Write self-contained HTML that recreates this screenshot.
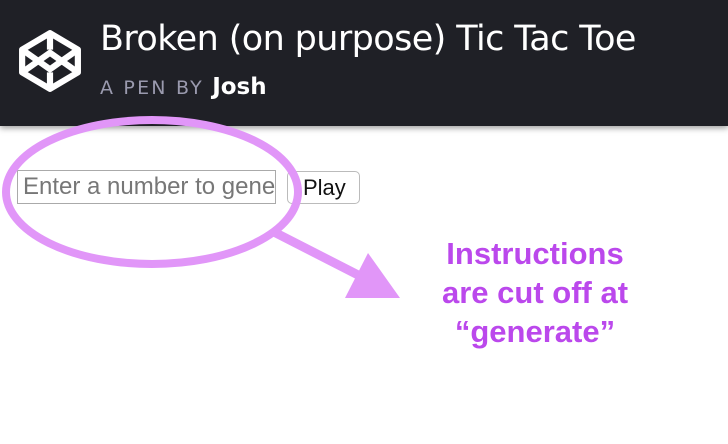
<!DOCTYPE html>
<html><head><style>
body{margin:0;width:728px;height:444px;background:#fff;position:relative;overflow:hidden;font-family:"Liberation Sans",sans-serif}
.hdr{position:absolute;left:0;top:0;width:728px;height:126px;background:#1f2026;box-shadow:0 2px 6px rgba(0,0,0,.4)}
.t{position:absolute;left:100px;top:19px;color:#fff;font-size:35px;font-family:"DejaVu Sans","Liberation Sans",sans-serif;letter-spacing:-0.6px}
.s{position:absolute;left:100px;top:74px;color:#9a9aae;font-size:19px;font-family:"DejaVu Sans",sans-serif;letter-spacing:2.2px}
.s b{color:#fff;letter-spacing:0;font-size:23px}
.inp{position:absolute;left:17px;top:170px;width:259px;height:34px;border:1px solid #aaa;box-sizing:border-box;font-size:24px;color:#777;padding:2px 5px;white-space:nowrap;overflow:hidden}
.btn{position:absolute;left:287px;top:171px;width:73px;height:33px;border:1px solid #bbb;border-radius:5px;box-sizing:border-box;font-size:22px;padding:3px 0 0 15px;color:#111}
.msg{position:absolute;left:395px;top:234px;width:280px;text-align:center;color:#bb48ec;font-weight:bold;font-size:31px;line-height:39px}
</style></head><body>
<div class="hdr">
<svg style="position:absolute;left:18px;top:29px" width="64" height="64" viewBox="0 0 62 62" fill="none" stroke="#fff" stroke-width="6" stroke-linejoin="round">
<path d="M31 4 L58 20 L58 42 L31 58 L4 42 L4 20 Z"/>
<path d="M31 4 V20 M4 20 L31 39 L58 20 M4 42 L31 23 L58 42 M31 42 V58"/>
</svg>
<div class="t">Broken (on purpose) Tic Tac Toe</div>
<div class="s">A PEN BY <b>Josh</b></div>
</div>
<div class="inp">Enter a number to generate</div>
<div class="btn">Play</div>
<svg style="position:absolute;left:0;top:0" width="728" height="444">
<ellipse cx="152" cy="192" rx="146" ry="72" fill="none" stroke="#e196f8" stroke-width="8"/>
<path d="M272 231 L362 277" stroke="#e196f8" stroke-width="9"/>
<path d="M345 298 L400 298 L368 253 Z" fill="#e196f8"/>
</svg>
<div class="msg">Instructions<br>are cut off at<br>“generate”</div>
</body></html>
